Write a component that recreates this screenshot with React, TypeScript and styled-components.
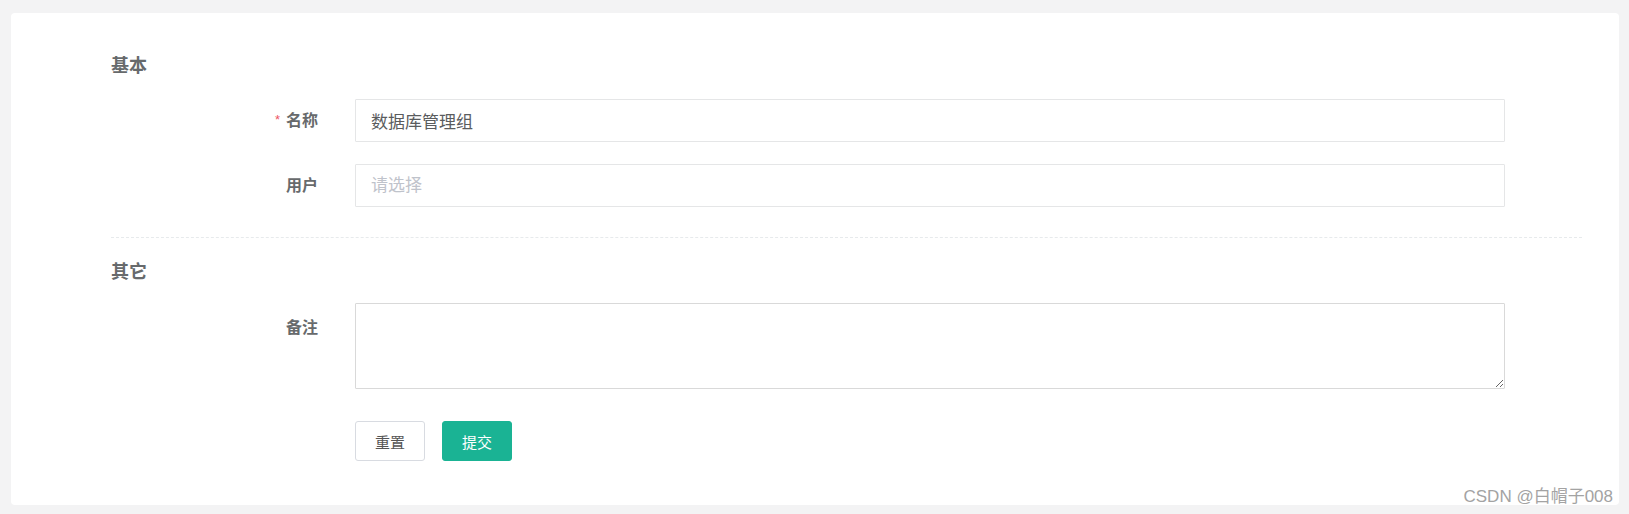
import styled, { createGlobalStyle } from "styled-components";

const GlobalStyle = createGlobalStyle`
  html, body {
    margin: 0;
    padding: 0;
    background: #f3f3f4;
  }
  body {
    font-family: "Liberation Sans", "Noto Sans CJK SC", sans-serif;
    color: #676a6c;
  }
`;

const Page = styled.div`
  padding: 13px 10px 9px 11px;
`;

const Card = styled.div`
  position: relative;
  background: #fff;
  border-radius: 4px;
  padding: 41px 37px 44px 100px;
`;

const SectionTitle = styled.h3<{ $gapBottom: number }>`
  margin: 0 0 ${(p) => p.$gapBottom}px 0;
  font-size: 18px;
  line-height: 24px;
  font-weight: 700;
  color: #676a6c;
`;

const Row = styled.div<{ $alignTop?: boolean }>`
  display: grid;
  grid-template-columns: 244px 1150px;
  align-items: ${(p) => (p.$alignTop ? "start" : "center")};
  & + & {
    margin-top: 22px;
  }
`;

const Label = styled.label<{ $offsetTop?: number }>`
  text-align: right;
  padding-right: 37px;
  padding-top: ${(p) => p.$offsetTop || 0}px;
  font-size: 16px;
  line-height: 22px;
  font-weight: 700;
  color: #676a6c;
`;

const Required = styled.span`
  color: #ed5565;
  font-size: 13px;
  font-weight: 400;
  margin-right: 6px;
  vertical-align: 2px;
`;

const TextInput = styled.input`
  box-sizing: border-box;
  width: 100%;
  height: 43px;
  border: 1px solid #e5e6e7;
  border-radius: 1px;
  padding: 0 15px;
  font-family: "Liberation Sans", "Noto Sans CJK SC", sans-serif;
  font-size: 17px;
  color: #5a5c5e;
  outline: none;
  &::placeholder {
    color: #bfc3cb;
  }
`;

const TextArea = styled.textarea`
  box-sizing: border-box;
  display: block;
  width: 100%;
  height: 86px;
  border: 1px solid #d9d9d9;
  border-radius: 1px;
  padding: 8px 15px;
  font-family: "Liberation Sans", "Noto Sans CJK SC", sans-serif;
  font-size: 17px;
  color: #5a5c5e;
  outline: none;
`;

const Divider = styled.div`
  border-top: 1px dashed #e7eaec;
  margin: 30px 0 22px;
`;

const Actions = styled.div`
  display: flex;
  gap: 17px;
  margin-top: 32px;
  padding-left: 244px;
`;

const Button = styled.button<{ $primary?: boolean }>`
  box-sizing: border-box;
  width: 70px;
  height: 40px;
  border-radius: 3px;
  border: 1px solid ${(p) => (p.$primary ? "#1ab394" : "#d8dbe1")};
  background: ${(p) => (p.$primary ? "#1ab394" : "#fff")};
  color: ${(p) => (p.$primary ? "#fff" : "#555")};
  font-family: "Liberation Sans", "Noto Sans CJK SC", sans-serif;
  font-size: 15px;
  padding: 0;
  cursor: pointer;
`;

const Watermark = styled.div`
  position: absolute;
  right: 6px;
  bottom: -3px;
  font-family: "Liberation Sans", "Noto Sans CJK SC", sans-serif;
  font-size: 17px;
  line-height: 22px;
  color: #a3a3a3;
  white-space: nowrap;
`;

export default function App() {
  return (
    <>
      <GlobalStyle />
      <Page>
        <Card>
          <SectionTitle $gapBottom={21}>基本</SectionTitle>
          <Row>
            <Label>
              <Required>*</Required>名称
            </Label>
            <TextInput defaultValue="数据库管理组" />
          </Row>
          <Row>
            <Label>用户</Label>
            <TextInput placeholder="请选择" />
          </Row>
          <Divider />
          <SectionTitle $gapBottom={19}>其它</SectionTitle>
          <Row $alignTop>
            <Label $offsetTop={14}>备注</Label>
            <TextArea />
          </Row>
          <Actions>
            <Button>重置</Button>
            <Button $primary>提交</Button>
          </Actions>
          <Watermark>CSDN @白帽子008</Watermark>
        </Card>
      </Page>
    </>
  );
}
